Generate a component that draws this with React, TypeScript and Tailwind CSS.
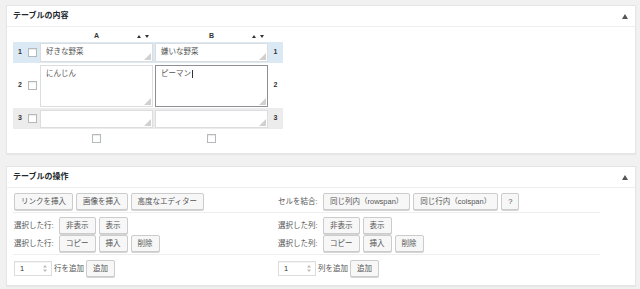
import React from "react";

const Btn = ({ children }: { children: React.ReactNode }) => (
  <button className="h-[17px] px-[6px] bg-[#f7f7f7] border border-[#cccccc] rounded-[2px] text-[7.5px] text-[#555555] leading-none shadow-[0_1px_0_#d5d5d5] whitespace-nowrap">
    {children}
  </button>
);

const Check = () => (
  <div className="w-[9px] h-[9px] border border-[#b4b9be] bg-white shadow-[inset_0_1px_1px_rgba(0,0,0,0.08)]" />
);

const Handle = () => (
  <svg className="absolute right-[1px] bottom-[1px]" width="7" height="7" viewBox="0 0 7 7">
    <polygon points="7,0 7,7 0,7" fill="#d0d0d0" />
  </svg>
);

const Cell = ({ h, text, focus }: { h: string; text?: string; focus?: boolean }) => (
  <div
    className={`relative w-[113px] ${h} bg-white border ${
      focus ? "border-[#8c8f94]" : "border-[#dddddd]"
    } pl-[5px] pt-[3px] text-[7.5px] leading-[10px] text-[#555555]`}
  >
    {text}
    {focus && <span className="inline-block w-[1px] h-[8px] bg-[#333] align-middle ml-[1px]" />}
    <Handle />
  </div>
);

const Arrows = () => (
  <div className="flex items-center gap-[4px] pr-[4px]">
    <svg width="4" height="3" viewBox="0 0 4 3">
      <polygon points="2,0 4,3 0,3" fill="#333" />
    </svg>
    <svg width="4" height="3" viewBox="0 0 4 3">
      <polygon points="0,0 4,0 2,3" fill="#333" />
    </svg>
  </div>
);

const ColHead = ({ label }: { label: string }) => (
  <div className="w-[113px] grid grid-cols-[1fr_auto_1fr] items-center">
    <div />
    <div className="text-[7px] font-bold text-[#333]">{label}</div>
    <div className="flex justify-end">
      <Arrows />
    </div>
  </div>
);

const Row = ({
  n,
  bg,
  rh,
  ch,
  a,
  b,
  focusB,
}: {
  n: string;
  bg: string;
  rh: string;
  ch: string;
  a?: string;
  b?: string;
  focusB?: boolean;
}) => (
  <div className={`flex items-center w-[270px] ${rh} ${bg}`}>
    <div className="w-[14px] text-center text-[7px] font-bold text-[#333]">{n}</div>
    <div className="w-[13px] pl-[1px]">
      <Check />
    </div>
    <Cell h={ch} text={a} />
    <div className="w-[2px]" />
    <Cell h={ch} text={b} focus={focusB} />
    <div className="w-[15px] text-center text-[7px] font-bold text-[#333]">{n}</div>
  </div>
);

const PanelHead = ({ title }: { title: string }) => (
  <div className="h-[21px] border-b border-[#eeeeee] flex items-center justify-between pl-[6px] pr-[7px]">
    <div className="text-[8px] font-semibold text-[#23282d]">{title}</div>
    <svg width="6" height="5" viewBox="0 0 6 5">
      <polygon points="3,0 6,5 0,5" fill="#555" />
    </svg>
  </div>
);

const Label = ({ children }: { children: React.ReactNode }) => (
  <div className="w-[45px] text-[7.5px] text-[#555555] whitespace-nowrap">{children}</div>
);

const NumInput = () => (
  <div className="w-[38px] h-[15px] border border-[#dddddd] bg-white flex items-center justify-between pl-[5px] pr-[4px] text-[7.5px] text-[#333] shadow-[inset_0_1px_1px_rgba(0,0,0,0.05)]">
    <span>1</span>
    <svg width="4" height="7" viewBox="0 0 4 7">
      <polygon points="2,0 4,2.5 0,2.5" fill="#bbb" />
      <polygon points="0,4.5 4,4.5 2,7" fill="#bbb" />
    </svg>
  </div>
);

export default function App() {
  return (
    <div className="w-[640px] h-[289px] bg-[#f1f1f1] pt-[5px] font-['Liberation_Sans','Noto_Sans_CJK_JP',sans-serif] overflow-hidden">
      {/* Panel 1 */}
      <div className="ml-[6px] w-[630px] bg-white border border-[#e5e5e5] shadow-[0_1px_1px_rgba(0,0,0,0.04)]">
        <PanelHead title="テーブルの内容" />
        <div className="pl-[6px] pt-[3px] pb-[10px]">
          <div className="flex h-[12px] items-center">
            <div className="w-[27px]" />
            <ColHead label="A" />
            <div className="w-[2px]" />
            <ColHead label="B" />
          </div>
          <Row n="1" bg="bg-[#dbe9f4]" rh="h-[21px]" ch="h-[19px]" a="好きな野菜" b="嫌いな野菜" />
          <Row n="2" bg="" rh="h-[45px]" ch="h-[42px]" a="にんじん" b="ピーマン" focusB />
          <Row n="3" bg="bg-[#ececec]" rh="h-[21px]" ch="h-[18px]" />
          <div className="flex mt-[5px]">
            <div className="w-[27px]" />
            <div className="w-[113px] flex justify-center">
              <Check />
            </div>
            <div className="w-[2px]" />
            <div className="w-[113px] flex justify-center">
              <Check />
            </div>
          </div>
        </div>
      </div>

      {/* Panel 2 */}
      <div className="ml-[6px] mt-[12px] w-[630px] bg-white border border-[#e5e5e5] shadow-[0_1px_1px_rgba(0,0,0,0.04)]">
        <PanelHead title="テーブルの操作" />
        <div className="px-[6px] pb-[8px]">
          <div className="w-[587px] grid grid-cols-[265px_322px] border-b border-[#eeeeee] pt-[5px] pb-[2px]">
            <div className="pl-[1px] flex gap-[3px]">
              <Btn>リンクを挿入</Btn>
              <Btn>画像を挿入</Btn>
              <Btn>高度なエディター</Btn>
            </div>
            <div className="flex items-center">
              <Label>セルを結合:</Label>
              <div className="flex gap-[3px]">
                <Btn>同じ列内（rowspan）</Btn>
                <Btn>同じ行内（colspan）</Btn>
                <Btn>?</Btn>
              </div>
            </div>
          </div>
          <div className="w-[587px] grid grid-cols-[265px_322px] border-b border-[#eeeeee] pt-[4px] pb-[2px]">
            <div className="pl-[1px] flex flex-col gap-[1px]">
              <div className="flex items-center">
                <Label>選択した行:</Label>
                <div className="flex gap-[3px]">
                  <Btn>非表示</Btn>
                  <Btn>表示</Btn>
                </div>
              </div>
              <div className="flex items-center">
                <Label>選択した行:</Label>
                <div className="flex gap-[3px]">
                  <Btn>コピー</Btn>
                  <Btn>挿入</Btn>
                  <Btn>削除</Btn>
                </div>
              </div>
            </div>
            <div className="flex flex-col gap-[1px]">
              <div className="flex items-center">
                <Label>選択した列:</Label>
                <div className="flex gap-[3px]">
                  <Btn>非表示</Btn>
                  <Btn>表示</Btn>
                </div>
              </div>
              <div className="flex items-center">
                <Label>選択した列:</Label>
                <div className="flex gap-[3px]">
                  <Btn>コピー</Btn>
                  <Btn>挿入</Btn>
                  <Btn>削除</Btn>
                </div>
              </div>
            </div>
          </div>
          <div className="w-[587px] grid grid-cols-[265px_322px] pt-[5px]">
            <div className="pl-[1px] flex items-center gap-[2px]">
              <NumInput />
              <span className="text-[7.5px] text-[#555555]">行を追加</span>
              <Btn>追加</Btn>
            </div>
            <div className="flex items-center gap-[2px]">
              <NumInput />
              <span className="text-[7.5px] text-[#555555]">列を追加</span>
              <Btn>追加</Btn>
            </div>
          </div>
        </div>
      </div>
    </div>
  );
}
